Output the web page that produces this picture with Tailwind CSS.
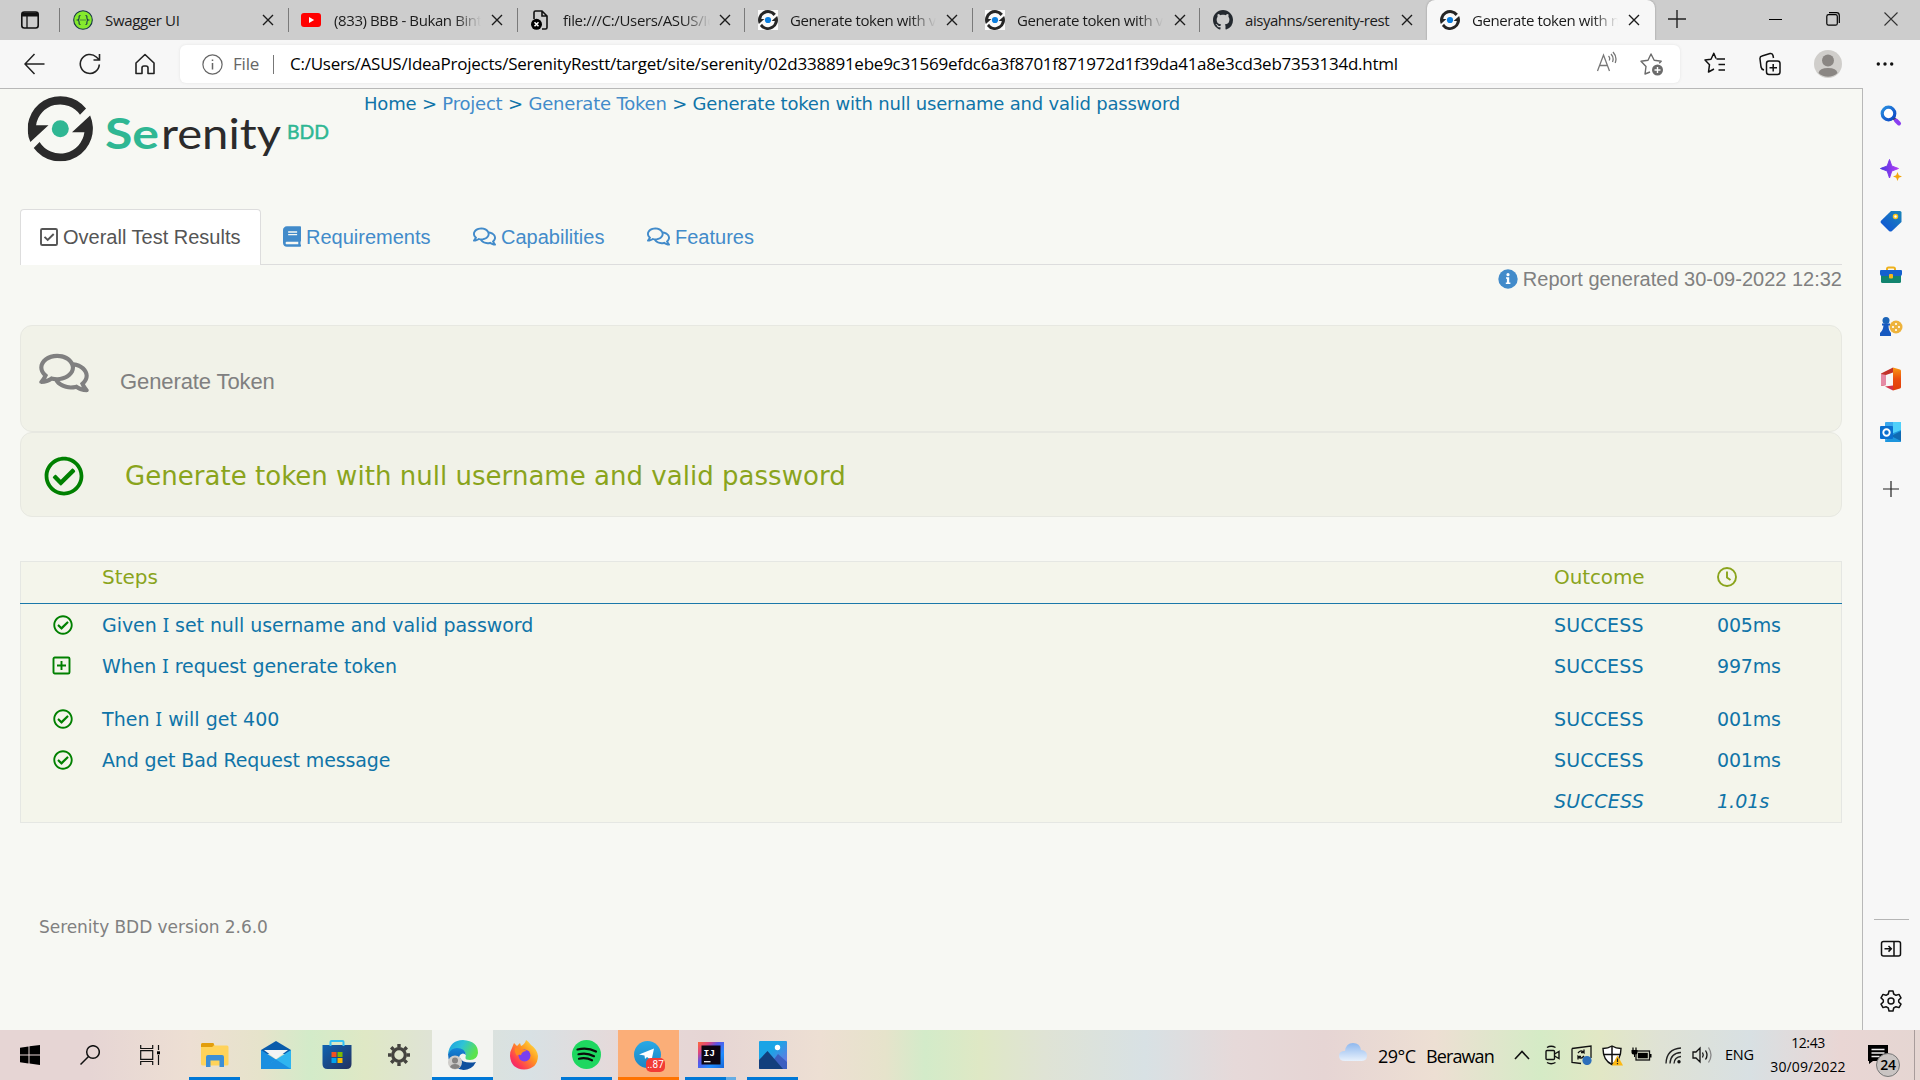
<!DOCTYPE html>
<html lang="en">
<head>
<meta charset="utf-8">
<title>Generate token with null username and valid password</title>
<script src="https://cdn.jsdelivr.net/npm/@tailwindcss/browser@4"></script>
</head>
<body class="w-[1920px] h-[1080px] overflow-hidden flex flex-col bg-[#f7f7f7] font-['Open_Sans','Noto_Sans',sans-serif] text-black">
<svg class="absolute w-0 h-0">
  <defs>
    <linearGradient id="gEdge" x1="0" y1="0" x2="1" y2="0.4"><stop offset="0" stop-color="#1b9de2"/><stop offset=".5" stop-color="#2fc3d6"/><stop offset="1" stop-color="#5be34c"/></linearGradient>
    <linearGradient id="gEdge2" x1="0" y1="0" x2="0" y2="1"><stop offset="0" stop-color="#1686d9"/><stop offset="1" stop-color="#0b4a9b"/></linearGradient>
    <linearGradient id="gFox" x1="1" y1="0" x2="0" y2="1"><stop offset="0" stop-color="#fff44f"/><stop offset=".4" stop-color="#ff9a1f"/><stop offset=".75" stop-color="#ff3b52"/><stop offset="1" stop-color="#e31587"/></linearGradient>
    <linearGradient id="gTg" x1="0" y1="0" x2="0" y2="1"><stop offset="0" stop-color="#2aa9e6"/><stop offset="1" stop-color="#1c86c4"/></linearGradient>
    <linearGradient id="gIj" x1="0" y1="0" x2="1" y2="1"><stop offset="0" stop-color="#fe6a3a"/><stop offset=".22" stop-color="#e0457b"/><stop offset=".4" stop-color="#5a55e8"/><stop offset=".7" stop-color="#1f8cff"/><stop offset="1" stop-color="#1766d8"/></linearGradient>
    <linearGradient id="gPh" x1="0" y1="0" x2="1" y2="1"><stop offset="0.400" stop-color="#1ba4e6"/><stop offset="1" stop-color="#7d6be0"/></linearGradient>
    <linearGradient id="gCloud" x1="0" y1="0" x2="0" y2="1"><stop offset="0" stop-color="#8fb8ee"/><stop offset="1" stop-color="#e8f1fc"/></linearGradient>
    <linearGradient id="gSt" x1="0" y1="0" x2="1" y2="1"><stop offset="0" stop-color="#0f63b3"/><stop offset="1" stop-color="#25315e"/></linearGradient>
    <linearGradient id="gBlue" x1="0" y1="0" x2="1" y2="1"><stop offset="0" stop-color="#2a8fe0"/><stop offset="1" stop-color="#0b45c4"/></linearGradient>
    <linearGradient id="gTag" x1="1" y1="0" x2="0" y2="1"><stop offset="0" stop-color="#1b86b8"/><stop offset="1" stop-color="#0f4fd8"/></linearGradient>
    <linearGradient id="gPur" x1="0" y1="0" x2="1" y2="0"><stop offset="0" stop-color="#4a35e0"/><stop offset="1" stop-color="#b53df5"/></linearGradient>
    <linearGradient id="gOff" x1="0" y1="0" x2="0" y2="1"><stop offset="0" stop-color="#f99a13"/><stop offset=".5" stop-color="#ea4d0f"/><stop offset="1" stop-color="#e03d0a"/></linearGradient>
    <symbol id="x" viewBox="0 0 12 12"><path d="M1 1l10 10M11 1L1 11" stroke="currentColor" stroke-width="1.4" fill="none"/></symbol>
    <symbol id="ring" viewBox="0 0 64 64">
      <path d="M2.800 45A32 32 0 0 1 57.200 12.300L51.300 18.200A23.800 23.800 0 0 0 8.400 28.500H20.500Z"/>
      <path d="M61.200 19A32 32 0 0 1 6.100 50.800L11.800 45A23.800 23.800 0 0 0 55.600 35.500H43.500Z"/>
    </symbol>
    <symbol id="fav" viewBox="0 0 20 20"><rect width="20" height="20" fill="#fafafa"/><g transform="scale(.3125)" fill="#262626"><path d="M2.800 45A32 32 0 0 1 57.200 12.300L50 19.500A22 22 0 0 0 10.300 28.500H20.500Z"/><path d="M61.200 19A32 32 0 0 1 6.100 50.800L13 44A22 22 0 0 0 53.700 35.500H43.500Z"/></g><circle cx="10" cy="10" r="3.100" fill="#0c7fe0"/></symbol>
    <symbol id="check" viewBox="0 0 512 512"><path fill="currentColor" d="M256 8C119.033 8 8 119.033 8 256s111.033 248 248 248 248-111.033 248-248S392.967 8 256 8zm0 48c110.532 0 200 89.451 200 200 0 110.532-89.451 200-200 200-110.532 0-200-89.451-200-200 0-110.532 89.451-200 200-200m140.204 130.267l-22.536-22.718c-4.667-4.705-12.265-4.736-16.970-.068L215.346 303.697l-59.792-60.277c-4.667-4.705-12.265-4.736-16.970-.069l-22.719 22.536c-4.705 4.667-4.736 12.265-.068 16.971l90.781 91.516c4.667 4.705 12.265 4.736 16.970.068l172.589-171.204c4.704-4.668 4.734-12.266.067-16.971z"/></symbol>
    <symbol id="comments" viewBox="0 0 576 512"><path fill="currentColor" d="M532 386.2c27.5-27.1 44-61.1 44-98.2 0-80-76.5-146.1-176.2-157.9C368.3 72.5 294.3 32 208 32 93.1 32 0 103.6 0 192c0 37 16.5 71 44 98.2-15.3 30.7-37.3 54.5-37.7 54.9-6.3 6.7-8.1 16.5-4.4 25 3.6 8.5 12 14 21.2 14 53.5 0 96.7-20.2 125.2-38.8 9.2 2.1 18.7 3.7 28.4 4.9C208.1 407.6 281.8 448 368 448c20.8 0 40.8-2.4 59.8-6.8C456.3 459.7 499.4 480 553 480c9.2 0 17.5-5.5 21.2-14 3.6-8.5 1.9-18.3-4.4-25-.4-.3-22.5-24.1-37.8-54.8zm-392.8-92.3L122.1 305c-14.1 9.1-28.500 16.3-43.1 21.4 2.7-4.7 5.4-9.7 8-14.800l15.5-31.1L77.700 256C64.200 242.600 48 220.700 48 192c0-60.700 73.300-112 160-112s160 51.300 160 112-73.300 112-160 112c-16.500 0-33-1.900-49-5.600l-19.800-4.500zM498.300 352l-24.700 24.400 15.500 31.100c2.600 5.100 5.300 10.100 8 14.800-14.600-5.100-29-12.300-43.100-21.400l-17.100-11.100-19.900 4.600c-16 3.700-32.500 5.600-49 5.600-54 0-102.200-20.100-131.300-49.700C338 339.500 416 272.900 416 192c0-3.400-.4-6.700-.7-10C479.700 196.500 528 238.800 528 288c0 28.700-16.200 50.600-29.700 64z"/></symbol>
  </defs>
</svg>

<!-- Tab strip -->
<header class="h-10 flex shrink-0 bg-[#cdcdcd] text-[15px] text-[#1b1b1b]">
  <div class="w-[59px] pl-5 flex items-center"><svg class="w-5 h-5" viewBox="0 0 20 20" fill="none" stroke="#111" stroke-width="1.600"><rect x="1.800" y="2" width="16.400" height="16" rx="2.500"/><path d="M2 4.500h16" stroke-width="4"/><path d="M7 6v12" stroke-width="1.300"/></svg></div>
  <div class="w-[229px] flex items-center relative"><i class="w-px h-6 bg-[#7a7a7a]"></i>
    <svg class="w-5 h-5 ml-[13px]" viewBox="0 0 20 20"><circle cx="10" cy="10" r="9.300" fill="#85ea2d" stroke="#173647" stroke-width="1.100"/><path d="M7.500 5.500c-1.600 0-1.400 1-1.400 2.200 0 1.400-.3 2-1.400 2.300 1.100.3 1.400.9 1.400 2.300 0 1.200-.2 2.200 1.400 2.200M12.500 5.500c1.600 0 1.400 1 1.400 2.200 0 1.400.3 2 1.400 2.300-1.100.3-1.400.9-1.400 2.300 0 1.200.2 2.200-1.400 2.200" stroke="#173647" fill="none" stroke-width="1.100"/><path d="M7.500 10h1M9.500 10h1M11.500 10h1" stroke="#173647"/></svg>
    <span class="ml-3 w-[147px] whitespace-nowrap overflow-hidden tracking-[-0.35px]">Swagger UI</span><svg class="w-3 h-3 ml-2.5"><use href="#x"/></svg></div>
  <div class="w-[229px] flex items-center"><i class="w-px h-6 bg-[#7a7a7a]"></i>
    <svg class="w-5 h-5 ml-3" viewBox="0 0 20 20"><rect y="3" width="20" height="14" rx="3" fill="#f00"/><path d="M8 7l5.200 3L8 13z" fill="#fff"/></svg>
    <span class="ml-[13px] w-[147px] whitespace-nowrap overflow-hidden tracking-[-0.4px] [mask-image:linear-gradient(to_right,#000_82%,transparent)]">(833) BBB - Bukan Bintang</span><svg class="w-3 h-3 ml-2.5"><use href="#x"/></svg></div>
  <div class="w-[227px] flex items-center"><i class="w-px h-6 bg-[#7a7a7a]"></i>
    <svg class="w-5 h-5 ml-3" viewBox="0 0 20 20"><path d="M4 9V2.500Q4 1 5.500 1H12l5 5v11.500q0 1.500-1.500 1.500H12M12 1v5h5" fill="none" stroke="#111" stroke-width="1.600"/><circle cx="6.500" cy="14.300" r="5.500" fill="#000"/><path d="M4.500 12.300l4 4m0-4l-4 4" stroke="#fff" stroke-width="1.500"/></svg>
    <span class="ml-[13px] w-[147px] whitespace-nowrap overflow-hidden tracking-[-0.35px] [mask-image:linear-gradient(to_right,#000_82%,transparent)]">file:///C:/Users/ASUS/IdeaProjects</span><svg class="w-3 h-3 ml-[9px]"><use href="#x"/></svg></div>
  <div class="w-[228px] flex items-center"><i class="w-px h-6 bg-[#7a7a7a]"></i>
    <svg class="w-5 h-5 ml-[13px]"><use href="#fav"/></svg>
    <span class="ml-3 w-[146px] whitespace-nowrap overflow-hidden tracking-[-0.4px] [mask-image:linear-gradient(to_right,#000_82%,transparent)]">Generate token with valid</span><svg class="w-3 h-3 ml-2.5"><use href="#x"/></svg></div>
  <div class="w-[227px] flex items-center"><i class="w-px h-6 bg-[#7a7a7a]"></i>
    <svg class="w-5 h-5 ml-3"><use href="#fav"/></svg>
    <span class="ml-3 w-[146px] whitespace-nowrap overflow-hidden tracking-[-0.4px] [mask-image:linear-gradient(to_right,#000_82%,transparent)]">Generate token with valid</span><svg class="w-3 h-3 ml-[11px]"><use href="#x"/></svg></div>
  <div class="w-[228px] flex items-center"><i class="w-px h-6 bg-[#7a7a7a]"></i>
    <svg class="w-5 h-5 ml-[13px]" viewBox="0 0 16 16"><path fill="#24292f" d="M8 0C3.580 0 0 3.580 0 8c0 3.540 2.290 6.530 5.470 7.590.4.070.55-.17.55-.38 0-.19-.01-.82-.01-1.490-2.010.37-2.530-.49-2.690-.94-.09-.23-.48-.94-.82-1.130-.28-.15-.68-.52-.01-.53.63-.01 1.080.58 1.230.82.72 1.210 1.870.87 2.330.66.07-.52.28-.87.51-1.070-1.780-.2-3.640-.89-3.640-3.950 0-.87.31-1.590.82-2.150-.08-.2-.36-1.020.08-2.120 0 0 .67-.21 2.200.82.64-.18 1.320-.27 2-.27s1.360.09 2 .27c1.530-1.040 2.200-.82 2.200-.82.44 1.100.16 1.920.08 2.120.51.56.82 1.270.82 2.150 0 3.070-1.870 3.750-3.650 3.950.29.25.54.73.54 1.480 0 1.070-.01 1.930-.01 2.200 0 .21.15.46.55.38A8.010 8.010 0 0 0 16 8c0-4.420-3.580-8-8-8z"/></svg>
    <span class="ml-3 w-[146px] whitespace-nowrap overflow-hidden tracking-[-0.45px]">aisyahns/serenity-rest</span><svg class="w-3 h-3 ml-2.5"><use href="#x"/></svg></div>
  <div class="w-[228px] flex items-center bg-[#f7f7f7] rounded-t-lg shadow-[0_0_2px_#888]">
    <svg class="w-5 h-5 ml-[13px]"><use href="#fav"/></svg>
    <span class="ml-3 w-[146px] whitespace-nowrap overflow-hidden tracking-[-0.4px] [mask-image:linear-gradient(to_right,#000_82%,transparent)]">Generate token with null</span><svg class="w-3 h-3 ml-2.5"><use href="#x"/></svg></div>
  <svg class="w-[18px] h-[18px] ml-[13px] mt-[10px]" viewBox="0 0 18 18"><path d="M9 0v18M0 9h18" stroke="#222" stroke-width="1.400"/></svg>
  <div class="ml-auto flex items-center pr-[22px] gap-11 pb-0.5">
    <svg class="w-[13px] h-3.5" viewBox="0 0 13 14"><path d="M0 7.500h13" stroke="#000"/></svg>
    <svg class="w-3.5 h-3.5" viewBox="0 0 14 14" fill="none" stroke="#000" stroke-width="1.200"><rect x=".8" y="2.600" width="10.500" height="10.600" rx="1.800"/><path d="M3 .7h7.500q2.800 0 2.800 2.800V11"/></svg>
    <svg class="w-3.5 h-3.5" viewBox="0 0 14 14"><path d="M.5.5l13 13M13.500.5l-13 13" stroke="#333" stroke-width="1.100"/></svg>
  </div>
</header>

<!-- Toolbar -->
<div class="h-12 shrink-0 flex items-center bg-[#f7f7f7]">
  <svg class="w-[21px] h-[22px] ml-6" viewBox="0 0 21 22" fill="none" stroke="#222" stroke-width="1.500"><path d="M20.500 11H1.500M10.500 1L1 11l9.500 10"/></svg>
  <svg class="w-[22px] h-[22px] ml-[34px]" viewBox="0 0 22 22" fill="none" stroke="#222" stroke-width="1.600"><path d="M20.300 11.500a9.500 9.500 0 1 1-3-7.500l2.700 2.500M20.500 1v6h-6"/></svg>
  <svg class="w-[22px] h-[22px] ml-[33px]" viewBox="0 0 22 22" fill="none" stroke="#222" stroke-width="1.600" stroke-linejoin="round"><path d="M2 10l9-8.500 9 8.500v10.500h-6v-5.500q0-2-2-2h-2q-2 0-2 2v5.500H2z"/></svg>
  <div class="ml-6 w-[1500px] h-[38px] bg-white rounded-md shadow-[0_0_3px_#e2e2e2] flex items-center text-[17px]">
    <svg class="w-[21px] h-[21px] ml-[22px]" viewBox="0 0 21 21" fill="none" stroke="#666" stroke-width="1.200"><circle cx="10.500" cy="10.500" r="9.600"/><path d="M10.500 9v6.500M10.500 5.500v1.600" stroke-width="1.500"/></svg>
    <span class="ml-2.5 w-[40px] text-[#666] tracking-[-0.2px]">File</span><i class="w-px h-[19px] bg-[#777]"></i>
    <span class="ml-4 w-[1200px] whitespace-nowrap tracking-[-0.24px]">C:/Users/ASUS/IdeaProjects/SerenityRestt/target/site/serenity/02d338891ebe9c31569efdc6a3f8701f871972d1f39da41a8e3cd3eb7353134d.html</span>
    <svg class="w-[22px] h-[22px] ml-[106px] -mt-1" viewBox="0 0 22 22" fill="none" stroke="#777" stroke-width="1.300"><path d="M1.500 20L7.500 4l6 16M3.600 14.500h7.800M12.500 5q2 2 .7 4.500M15 3q3.300 3.500 1.500 8M17 1q4.500 5 2.200 11"/></svg>
    <svg class="w-6 h-6 ml-[22px]" viewBox="0 0 24 24" fill="none" stroke="#6b6b6b" stroke-width="1.400" stroke-linejoin="round"><path d="M10 20l-5 2 1-7.500L1 9.200l7-1L11 2l3.200 6.200 7 1-2 2"/><circle cx="17.500" cy="18" r="5.500" fill="#6b6b6b" stroke="none"/><path d="M17.500 15v6M14.500 18h6" stroke="#fff"/></svg>
  </div>
  <svg class="w-[22px] h-[22px] ml-[24px] -mt-0.5" viewBox="0 0 22 22" fill="none" stroke="#111" stroke-width="1.500" stroke-linejoin="round"><path d="M12.500 7h8.500M14.500 12.500H21M14.500 18H21M12 6.500L9.800 1.200 7 7.200 1 8l4.500 4.700L4.500 20l5.500-3"/></svg>
  <svg class="w-[22px] h-[24px] ml-[33px]" viewBox="0 0 22 24" fill="none" stroke="#111" stroke-width="1.500"><rect x="7.500" y="9" width="13.500" height="13.500" rx="2.500"/><path d="M14.200 12v7.500M10.500 15.700H18M5 18q-2.500-.5-3-3L1 7q-.3-2.500 2-3l8-2.500q2.500-.5 3 2l.5 2.500"/></svg>
  <svg class="w-7 h-7 ml-[33px]" viewBox="0 0 28 28"><circle cx="14" cy="14" r="14" fill="#d0cecb"/><circle cx="14" cy="10.500" r="6" fill="#8a8683"/><path d="M4.500 23q1-5 9.500-5t9.500 5a14 14 0 0 1-19 0z" fill="#8a8683"/></svg>
  <svg class="w-[18px] h-1.5 ml-[34px]" viewBox="0 0 18 6" fill="#111"><circle cx="2.300" cy="3" r="1.700"/><circle cx="9" cy="3" r="1.700"/><circle cx="15.700" cy="3" r="1.700"/></svg>
</div>

<div class="flex flex-1 min-h-0">
  <!-- Report page -->
  <main class="w-[1863px] bg-[#f7f8f3] border-t border-r border-[#b8b8b8] px-5 flex flex-col font-['DejaVu_Sans',sans-serif] overflow-hidden">
    <div class="flex h-[120px] shrink-0">
      <svg class="w-[344px] h-[90px] shrink-0" viewBox="20 89 344 90">
        <svg x="27.500" y="96" width="65.500" height="65.500" fill="#2b2b2b"><use href="#ring"/></svg>
        <circle cx="60.300" cy="128.800" r="8.500" fill="#2fb793"/>
        <text x="105" y="148.500" font-family="Lato" font-size="42.500" textLength="54" lengthAdjust="spacingAndGlyphs" font-weight="700" fill="#2fb793">Se</text>
        <text x="161" y="148.500" font-family="Lato" font-size="42.500" textLength="120" lengthAdjust="spacingAndGlyphs" fill="#2b2b2b">renity</text>
        <text x="287" y="138.500" font-family="Lato" font-size="19.500" textLength="42" lengthAdjust="spacingAndGlyphs" stroke="#2fb793" stroke-width=".5" fill="#2fb793">BDD</text>
      </svg>
      <p class="pt-px text-[18px] leading-[28px] text-[#0f74a8] whitespace-nowrap tracking-[-0.2px]">Home &gt; <span class="text-[#428bca]">Project</span> &gt; <span class="text-[#428bca]">Generate Token</span> &gt; Generate token with null username and valid password</p>
    </div>
    <nav class="flex h-14 shrink-0 border-b border-[#ddd] text-[20px] text-[#428bca] font-['Liberation_Sans',Arial,sans-serif]">
      <a class="w-[241px] h-14 flex items-center border border-b-0 border-[#ddd] rounded-t bg-white pl-[19px] pb-0.5 text-[#555]"><svg class="w-[18px] h-[18px]" viewBox="0 0 18 18" fill="none" stroke="#555" stroke-width="1.900"><rect x="1" y="1" width="16" height="16" rx="1.300"/><path d="M4.500 8.800l3.200 3.200L13.700 6"/></svg><span class="ml-[5px] whitespace-nowrap">Overall Test Results</span></a>
      <a class="w-[190px] flex items-center pl-[22px]"><svg class="w-[18px] h-[21px]" viewBox="0 0 448 512"><path fill="#428bca" d="M448 360V24c0-13.300-10.700-24-24-24H96C43 0 0 43 0 96v320c0 53 43 96 96 96h328c13.300 0 24-10.700 24-24v-16c0-7.500-3.500-14.300-8.900-18.700-4.200-15.400-4.200-59.300 0-74.700 5.400-4.300 8.900-11.100 8.900-18.600zM128 134c0-3.300 2.700-6 6-6h212c3.300 0 6 2.700 6 6v20c0 3.300-2.700 6-6 6H134c-3.300 0-6-2.700-6-6v-20zm0 64c0-3.300 2.700-6 6-6h212c3.300 0 6 2.700 6 6v20c0 3.300-2.700 6-6 6H134c-3.300 0-6-2.700-6-6v-20zm253.400 250H96c-17.700 0-32-14.300-32-32 0-17.600 14.400-32 32-32h285.400c-1.900 17.100-1.900 46.900 0 64z"/></svg><span class="ml-[5px]">Requirements</span></a>
      <a class="w-[174px] flex items-center pl-[22px]"><svg class="w-[23px] h-[21px]"><use href="#comments"/></svg><span class="ml-[5px]">Capabilities</span></a>
      <a class="flex items-center pl-[22px]"><svg class="w-[23px] h-[21px]"><use href="#comments"/></svg><span class="ml-[5px]">Features</span></a>
    </nav>
    <div class="h-[60px] shrink-0 flex justify-end items-start text-[20px] leading-[28px] text-[#808080] font-['Liberation_Sans',Arial,sans-serif]">
      <svg class="w-5 h-5 mt-1 mr-[5px]" viewBox="0 0 20 20"><circle cx="10" cy="10" r="9.700" fill="#428bca"/><path d="M8 8.300h3.200v5.300h1.200v1.400H7.800v-1.400h1.100V9.700H8z" fill="#fff"/><circle cx="10" cy="5.700" r="1.600" fill="#fff"/></svg>Report generated 30-09-2022 12:32</div>
    <section class="h-[107px] shrink-0 flex rounded-xl border border-[#e7e8e1] bg-[#f1f2e8] pl-[18px] text-[#808080] font-['Liberation_Sans',Arial,sans-serif] text-[22px]">
      <svg class="w-[50px] h-[44px] mt-[25px]"><use href="#comments"/></svg><h3 class="ml-[31px] mt-[42px] leading-[28px] tracking-[-0.1px]">Generate Token</h3>
    </section>
    <section class="h-[85px] shrink-0 flex items-center rounded-xl border border-[#e7e8e1] bg-[#f1f2e8] pl-[23px] text-[#8aa41c] text-[26px]">
      <svg class="w-10 h-10 mt-0.5 text-[#008000]"><use href="#check"/></svg><h2 class="ml-[41px] mt-[3px] whitespace-nowrap tracking-[0.03px]">Generate token with null username and valid password</h2>
    </section>
    <section class="mt-11 h-[262px] shrink-0 border border-[#e5e7e3] bg-[#f4f5eb] text-[#0f74a8] text-[19px]">
      <div class="-mx-px px-px h-[42px] border-b border-[#1a78aa] flex text-[#8aa41c] text-[20px] leading-[31px]"><span class="ml-[81px] w-[1452px]">Steps</span><span class="w-[163px] tracking-[-0.1px]">Outcome</span><svg class="w-5 h-5 mt-[5px]" viewBox="0 0 20 20" fill="none" stroke="#8aa41c" stroke-width="1.900"><circle cx="10" cy="10" r="9"/><path d="M10 4.500v6l3.500 2.500"/></svg></div>
      <div class="h-[41px] pl-[32px] flex items-center mt-[1px]"><svg class="w-5 h-5 mb-0.5 text-[#008000]"><use href="#check"/></svg><span class="ml-[29px] w-[1452px] tracking-[-0.06px]">Given <span class="font-['Noto_Sans']">I</span> set null username and valid password</span><span class="w-[163px] tracking-[0.15px]">SUCCESS</span><span class="tracking-[-0.2px]">005ms</span></div>
      <div class="h-[41px] pl-[31px] flex items-center"><svg class="w-[19px] h-[19px] mb-0.5 text-[#008000]" viewBox="0 0 19 19" fill="none" stroke="currentColor" stroke-width="1.900"><rect x="1.500" y="1.500" width="16" height="16" rx="1.300"/><path d="M9.500 5v9M5 9.500h9"/></svg><span class="ml-[31px] w-[1452px] tracking-[-0.06px]">When <span class="font-['Noto_Sans']">I</span> request generate token</span><span class="w-[163px] tracking-[0.15px]">SUCCESS</span><span class="tracking-[-0.2px]">997ms</span></div>
      <div class="h-[41px] pl-[32px] flex items-center mt-3"><svg class="w-5 h-5 mb-0.5 text-[#008000]"><use href="#check"/></svg><span class="ml-[29px] w-[1452px] tracking-[0.03px]">Then <span class="font-['Noto_Sans']">I</span> will get 400</span><span class="w-[163px] tracking-[0.15px]">SUCCESS</span><span class="tracking-[-0.2px]">001ms</span></div>
      <div class="h-[41px] pl-[32px] flex items-center"><svg class="w-5 h-5 mb-0.5 text-[#008000]"><use href="#check"/></svg><span class="ml-[29px] w-[1452px] tracking-[-0.13px]">And get Bad Request message</span><span class="w-[163px] tracking-[0.15px]">SUCCESS</span><span class="tracking-[-0.2px]">001ms</span></div>
      <div class="h-[41px] pl-[1533px] flex items-center italic"><span class="w-[163px] tracking-[0.3px]">SUCCESS</span><span>1.01s</span></div>
    </section>
    <footer class="mt-[91px] pl-[19px] text-[17px] leading-[26px] text-[#808080] tracking-[-0.05px]">Serenity BDD version 2.6.0</footer>
  </main>

  <!-- Edge sidebar -->
  <aside class="w-[56px] flex flex-col items-center pt-[17px]">
    <svg class="w-[22px] h-[22px]" viewBox="0 0 22 22"><circle cx="8.500" cy="8.500" r="6.300" fill="#fff" stroke="url(#gBlue)" stroke-width="3.200"/><path d="M14 13.500l2 2" stroke="#333a55" stroke-width="3"/><path d="M16 15.500l3 3" stroke="#8a3df0" stroke-width="4" stroke-linecap="round"/></svg>
    <svg class="w-[22px] h-[22px] mt-8" viewBox="0 0 22 22"><path d="M9.500.5l2.300 6.500L18.500 9.500l-6.700 2.500L9.500 19l-2.300-7L.5 9.500 7.200 7z" fill="url(#gPur)" stroke="url(#gPur)" stroke-linejoin="round"/><path d="M17.500 13l1.300 3.200 3.200 1.300-3.200 1.300L17.500 22l-1.300-3.200L13 17.500l3.200-1.300z" fill="#f2a60d"/></svg>
    <svg class="w-[22px] h-[22px] mt-[29px]" viewBox="0 0 22 22"><path d="M11 1h9q1.500 0 1.500 1.500V12L12 21q-1.500 1-3 0L1 13q-1-1 0-2.300z" fill="url(#gTag)"/><circle cx="15.500" cy="6.500" r="2" fill="#fff" stroke="#f5c21c" stroke-width="1.500"/></svg>
    <svg class="w-[22px] h-[22px] mt-[33px]" viewBox="0 0 22 22"><path d="M7 6V4q0-1.500 1.500-1.500h5Q15 2.500 15 4v2" fill="none" stroke="#eeb11d" stroke-width="2"/><rect x="1" y="9" width="20" height="9" rx="1.500" fill="#12846f"/><path d="M0 6q0-1 1-1h20q1 0 1 1v3q0 2-2 2H2q-2 0-2-2z" fill="#1560cf"/><rect x="9" y="9" width="4" height="4.500" rx="1" fill="#f5b61c"/></svg>
    <svg class="w-[24px] h-[22px] mt-[29px]" viewBox="0 0 24 22"><circle cx="17" cy="11" r="6.500" fill="#eeb33c"/><g fill="#fff"><circle cx="17" cy="8" r="1.100"/><circle cx="17" cy="14" r="1.100"/><circle cx="14" cy="11" r="1.100"/><circle cx="20" cy="11" r="1.100"/></g><circle cx="7" cy="4.500" r="3.500" fill="#1c64b8"/><path d="M3 7.500h8v2H9.500q0 5 2.500 7.500v3H1v-3q3-2.500 3.500-7.500H3z" fill="#1759c0"/></svg>
    <svg class="w-[22px] h-[24px] mt-[29px]" viewBox="0 0 22 24"><path d="M1 6.500L13 .5V5.500L6 8v10l-5 1z" fill="#c2322b"/><path d="M1 7l5 1v10l-5 1z" fill="#e58aa5"/><path d="M13 .5l7 2q1 .3 1 1.500v16q0 1.200-1 1.500l-7 2V5.500z" fill="url(#gOff)"/><path d="M5 19.500l8-1v5z" fill="#d3334a"/></svg>
    <svg class="w-[22px] h-[22px] mt-[30px]" viewBox="0 0 22 22"><rect x="5" y="1" width="16" height="20" rx="1" fill="#3ba9ee"/><path d="M13 1h8v11h-8z" fill="#50d0fa"/><path d="M11 13l10-4v11q0 1-1 1H5z" fill="#1d95dd"/><path d="M11 15l10-5v10z" fill="#0f6ab3"/><rect y="5" width="13" height="13" rx="1" fill="#0a6fcf"/><circle cx="6.500" cy="11.500" r="3.200" fill="none" stroke="#fff" stroke-width="1.900"/></svg>
    <svg class="w-4 h-4 mt-[38px]" viewBox="0 0 16 16"><path d="M8 0v16M0 8h16" stroke="#222" stroke-width="1.200"/></svg>
    <div class="mt-auto w-[35px] h-px bg-[#b5b5b5]"></div>
    <svg class="w-[22px] h-[18px] mt-[20px]" viewBox="0 0 22 18" fill="none" stroke="#111" stroke-width="1.500"><rect x="1.500" y="1.500" width="19" height="14.500" rx="2"/><path d="M14 1.500V16M4.500 8.800H11M8.500 6l2.800 2.800-2.800 2.800"/></svg>
    <svg class="w-[24px] h-[24px] mt-[31px] mb-[17px]" viewBox="0 0 24 24" fill="none" stroke="#111" stroke-width="1.500" stroke-linejoin="round"><circle cx="12" cy="12" r="3"/><path d="M10 2h4l.7 3 2.300 1.300 3-.9 2 3.500-2.300 2.100v2l2.300 2.100-2 3.500-3-.9-2.300 1.300-.7 3h-4l-.7-3L7 17.700l-3 .9-2-3.500L4.300 13v-2L2 8.900l2-3.500 3 .9L9.300 5z"/></svg>
  </aside>
</div>

<!-- Taskbar -->
<div class="h-[50px] shrink-0 flex relative bg-[linear-gradient(to_right,#e6d5d4_0,#e6d5d4_90px,#eddfd3_190px,#e6e3cb_260px,#d3ebc9_310px,#dfe8c5_365px,#dfe3d5_430px,#d8e1e4_530px,#e6d9d9_620px,#e6d5d4_710px,#eddfd3_820px,#e6e3cb_885px,#d3ebc9_925px,#dfe8c5_980px,#dfe3d5_1045px,#d8e1e4_1145px,#e6d9d9_1235px,#e6d5d4_1325px,#eddfd3_1435px,#d5ebc6_1540px,#e2e7c5_1600px,#dfe2d5_1660px,#d8e0e3_1750px,#e9d6d4_1840px,#e5d6d2_1920px)]">
  <div class="w-[60px] flex items-center justify-center"><svg class="w-5 h-5" viewBox="0 0 20 20"><path d="M0 2.700L8.500 1.500v8H0zM9.500 1.300L20 0v9.500H9.500zM0 10.500h8.500v8L0 17.300zM9.500 10.500H20V20L9.500 18.600z"/></svg></div>
  <div class="w-[60px] flex items-center justify-center"><svg class="w-5 h-5" viewBox="0 0 20 20" fill="none" stroke="#111" stroke-width="1.500"><circle cx="13" cy="7" r="6.300"/><path d="M8.500 11.500L.5 19.500"/></svg></div>
  <div class="w-[60px] flex items-center justify-center"><svg class="w-5 h-5" viewBox="0 0 20 20" fill="none" stroke="#111" stroke-width="1.200"><path d="M.7 0v3.500h12V0M.7 20v-3.500h12V20M.7 5.700h12v8.600H.7zM18.500 0v5M18.500 10v10"/><path d="M17 6.300h3v3h-3z" fill="#000" stroke="none"/></svg></div>
  <div class="w-[51px] ml-[9px] mr-[6px] flex items-center justify-center border-b-3 border-[#0078d7] pt-[2px]"><svg class="w-7 h-6" viewBox="0 0 28 24"><path d="M0 1.500Q0 0 1.500 0H12l2 2.500H26q1.500 0 1.500 1.500v17q0 1.500-1.500 1.500H2Q0 22.500 0 21z" fill="#ffd35a"/><path d="M0 1.500Q0 0 1.500 0H12q1 0 1 1.500T11 4H0z" fill="#e29d0c"/><path d="M5 24V14q0-2 2-2h14q2 0 2 2v10h-4.500v-6.500h-9V24z" fill="#3c8fd6"/></svg></div>
  <div class="w-[60px] flex items-center justify-center"><svg class="w-[30px] h-7" viewBox="0 0 30 28"><path d="M0 9L15 0l15 9v4H0z" fill="#0a5cab"/><path d="M0 9l30 19H0z" fill="#1b8fe0"/><path d="M30 9v19H1L15 18.500z" fill="#2fb5f0"/><path d="M15 18.500L30 28H0z" fill="#1b8fe0"/><path d="M3 9h24l-12 9z" fill="#f4f4f4"/></svg></div>
  <div class="w-[62px] flex items-center justify-center"><svg class="w-[30px] h-[30px]" viewBox="0 0 30 30"><path d="M.5 5h29v19q0 5-5 5h-19q-5 0-5-5z" fill="url(#gSt)"/><path d="M8.500 6V2q0-1 1-1h11q1 0 1 1v4" fill="none" stroke="#34c1f5" stroke-width="2"/><path d="M9.500 12h5v5h-5z" fill="#f25022"/><path d="M15.500 12h5v5h-5z" fill="#7fba00"/><path d="M9.500 18h5v5h-5z" fill="#00a4ef"/><path d="M15.500 18h5v5h-5z" fill="#ffb900"/></svg></div>
  <div class="w-[62px] mr-[2px] flex items-center justify-center"><svg class="w-[22px] h-[22px]" viewBox="-11 -11 22 22" fill="none" stroke="#44433f"><circle r="6.300" stroke-width="3.200"/><g stroke-width="3.400"><path d="M0-7.500V-11M0 7.500V11M7.500 0H11M-7.500 0H-11M5.300-5.300l2.500-2.500M-5.300 5.300l-2.500 2.500M5.300 5.300l2.500 2.500M-5.300-5.300l-2.500-2.500"/></g></svg></div>
  <div class="w-[61px] flex items-center justify-center bg-[#f3f4f1] border-b-3 border-[#0078d7] pt-[2px]"><svg class="w-[30px] h-[30px]" viewBox="0 0 30 30"><path d="M0 14Q2 0 15 0q15 1 15 13-1 7-8 7-5 0-4.500-2.500Q19 12 14 10 5 7 0 14z" fill="url(#gEdge)"/><path d="M0 14q3-6 9-6 8 0 9 7-3-3-6 0-4 7 5 12 2 1.300 3 1.500Q14 31 9 28 0 24 0 14z" fill="url(#gEdge2)"/><path d="M12 18q3 6 16 4-4 8-13 8-5-6-3-12z" fill="#0e4f9e"/><circle cx="7" cy="22.500" r="7" fill="#cfcdca"/><circle cx="7" cy="20.500" r="3" fill="#858381"/><path d="M2 27q1-3 5-3t5 3a7 7 0 0 1-10 0z" fill="#858381"/></svg></div>
  <div class="w-[61px] flex items-center justify-center"><svg class="w-7 h-[30px]" viewBox="0 0 28 30"><path d="M2 8l2-5 3 3 3-3 1 3q4-2 5-6 2 1 5 5 6 4 7 11-.5 13-14 13.500Q1 29 0 16 0 11 2 8z" fill="url(#gFox)"/><circle cx="14.500" cy="15.500" r="6" fill="#7a3ff0"/><path d="M5 8q5 0 6 2 3-1 6 1-5 0-6 4-3-1-4 1Q4 12 5 8z" fill="#ff8a1f"/></svg></div>
  <div class="w-[51px] ml-[7px] mr-[6px] flex items-center justify-center border-b-3 border-[#0078d7] pt-[2px]"><svg class="w-[29px] h-[29px]" viewBox="0 0 29 29"><circle cx="14.500" cy="14.500" r="14.500" fill="#1ed760"/><path d="M5.500 9.500q10-2.500 18.500 2M6.500 14.200q8.500-2 15.500 2M7 18.700q7-1.700 13 1.600" fill="none" stroke="#0b0b0b" stroke-width="2.200" stroke-linecap="round"/></svg></div>
  <div class="w-[61px] flex items-center justify-center bg-[#fbae78] border-b-3 border-[#ff7300] relative pt-[2px] pr-[2px]"><svg class="w-[27px] h-[27px]" viewBox="0 0 27 27"><circle cx="13.500" cy="13.500" r="13.500" fill="url(#gTg)"/><path d="M5 13.500L20 7.500l-2.500 12-4.500-3.500-2 2-.5-3.500z" fill="#fff"/></svg><span class="absolute left-[28px] top-[28px] w-[19px] h-[14px] rounded-[5px] bg-[#f23b35] text-white text-[10px] leading-[14px] text-center font-['Roboto']">..87</span></div>
  <div class="w-[51px] ml-[6px] flex flex-col items-center pt-3"><svg class="w-[26px] h-[26px]" viewBox="0 0 26 26"><rect width="26" height="26" fill="url(#gIj)"/><rect x="3.500" y="3.500" width="19" height="19" fill="#0d0612"/><path d="M6 19.700h6.500" stroke="#fff" stroke-width="1.200"/><text x="5.500" y="13.500" font-family="Liberation Mono" font-weight="700" font-size="9.500" fill="#fff">IJ</text></svg><i class="mt-auto self-stretch h-[3px] bg-[linear-gradient(to_right,#0078d7_41px,#66ade4_41px)]"></i></div>
  <div class="w-[51px] ml-[11px] flex items-center justify-center border-b-3 border-[#0078d7] pt-[2px]"><svg class="w-7 h-7" viewBox="0 0 28 28"><rect width="28" height="28" rx="1" fill="url(#gPh)"/><circle cx="18.500" cy="6.500" r="2.700" fill="#fff"/><path d="M10 25l9-12 9 8v7H10z" fill="#3c5fc0"/><path d="M0 19L8.500 10 24 28H1Q0 28 0 27z" fill="#123f7d"/></svg></div>

  <div class="ml-auto flex items-center w-[582px]">
    <svg class="w-7 h-[20px] ml-[1px] -mt-1.5" viewBox="0 0 28 20"><path d="M6 19q-6 0-6-5t6-5Q7 1 14 1q7 0 8 7 6 .5 6 5.500T23 19z" fill="url(#gCloud)"/></svg>
    <span class="ml-[11px] w-[48px] text-[18px] tracking-[-0.5px] whitespace-nowrap mt-0.5">29°C</span><span class="w-[88px] text-[18px] tracking-[-0.9px] mt-0.5">Berawan</span>
    <svg class="w-4 h-[10px]" viewBox="0 0 16 10"><path d="M1 9l7-7.500L15 9" fill="none" stroke="#111" stroke-width="1.600"/></svg>
    <svg class="w-[15px] h-[20px] ml-[15px]" viewBox="0 0 15 20" fill="none" stroke="#111" stroke-width="1.400"><rect x="1" y="5.500" width="8.500" height="9" rx="1"/><path d="M9.500 9l4.500-2.500v7L9.500 11M2 2.500q4-2.500 8.500 0M2 17.500q4 2.500 8.500 0"/></svg>
    <svg class="w-[21px] h-[20px] ml-[11px]" viewBox="0 0 21 20" fill="none" stroke="#111" stroke-width="1.300"><path d="M1 3.500L20 1v12M10 18.500L1 17.500v-14M7 8q3-4 6-.5V4.500M13 11q-3 4-6 .5v3M13 7.500h-3M7 11.500h3"/><circle cx="16" cy="15.500" r="4.600" fill="#2d6fba" stroke="none"/></svg>
    <svg class="w-[21px] h-[21px] ml-[10px]" viewBox="0 0 21 21"><path d="M10 1q4 2.500 9 2.500 0 12-9 16-9-4-9-16Q6 3.500 10 1z" fill="#fff" stroke="#111" stroke-width="1.400"/><path d="M10 1v18M1.500 9.500h17" stroke="#111" stroke-width="1.500"/><path d="M15.500 10.500L21 20.500H9.800z" fill="#fdb913"/><path d="M15.500 13.500v3.500M15.500 18v1.300" stroke="#222" stroke-width="1.200"/></svg>
    <svg class="w-[21px] h-[15px] ml-[8px] mb-0.5" viewBox="0 0 21 15"><rect x="5" y="4" width="13.500" height="9" fill="none" stroke="#111" stroke-width="1.300"/><rect x="6.800" y="5.800" width="10" height="5.500"/><path d="M19 7h1.500v3.500H19zM.5 3h6v2.500q0 2-2 2H4V10H3V7.500H2.500q-2 0-2-2z"/><path d="M2 .5v3M5 .5v3" stroke="#000" stroke-width="1.200"/></svg>
    <svg class="w-[17px] h-[17px] ml-[13px]" viewBox="0 0 17 17" fill="none" stroke="#222" stroke-width="1.300"><path d="M1 16.500Q1.500 2 16 1M5 16.500Q5.500 6 16 5.500M9 16.500Q9.500 10 16 9.500"/><circle cx="14" cy="14.800" r="1.700" fill="#111" stroke="none"/></svg>
    <svg class="w-[20px] h-[18px] ml-[10px]" viewBox="0 0 20 18" fill="none" stroke="#111" stroke-width="1.300"><path d="M1 6h3l4-4v14l-4-4H1zM10.500 6.500q1.500 2.500 0 5M13.500 4.500q3 4.500 0 9"/><path d="M16.500 1.500q5 7.500 0 15" stroke="#888"/></svg>
    <span class="ml-[13px] w-[38px] text-[14.5px] tracking-[-0.2px]">ENG</span>
    <div class="w-[90px] flex flex-col text-center text-[14px] leading-[24px]"><span class="tracking-[-0.4px]">12:43</span><span class="tracking-[0.1px]">30/09/2022</span></div>
    <div class="relative w-[34px] h-[40px] ml-[15px]"><svg class="w-5 h-[19px] mt-[10px]" viewBox="0 0 20 19"><path d="M0 0h20v16H5l-4 3v-3H0z"/><path d="M3.500 4.500h13M3.500 8h13M3.500 11.500h8" stroke="#eee" stroke-width="1.300"/></svg><span class="absolute left-[8px] top-[18px] w-6 h-6 rounded-full bg-[#c9c4c2] border border-[#777] text-[14px] leading-[21px] text-center font-semibold tracking-[-0.3px]">24</span></div>
    <i class="ml-auto mr-[5px] w-px self-stretch bg-[#a89c9b]"></i>
  </div>
</div>
</body>
</html>
